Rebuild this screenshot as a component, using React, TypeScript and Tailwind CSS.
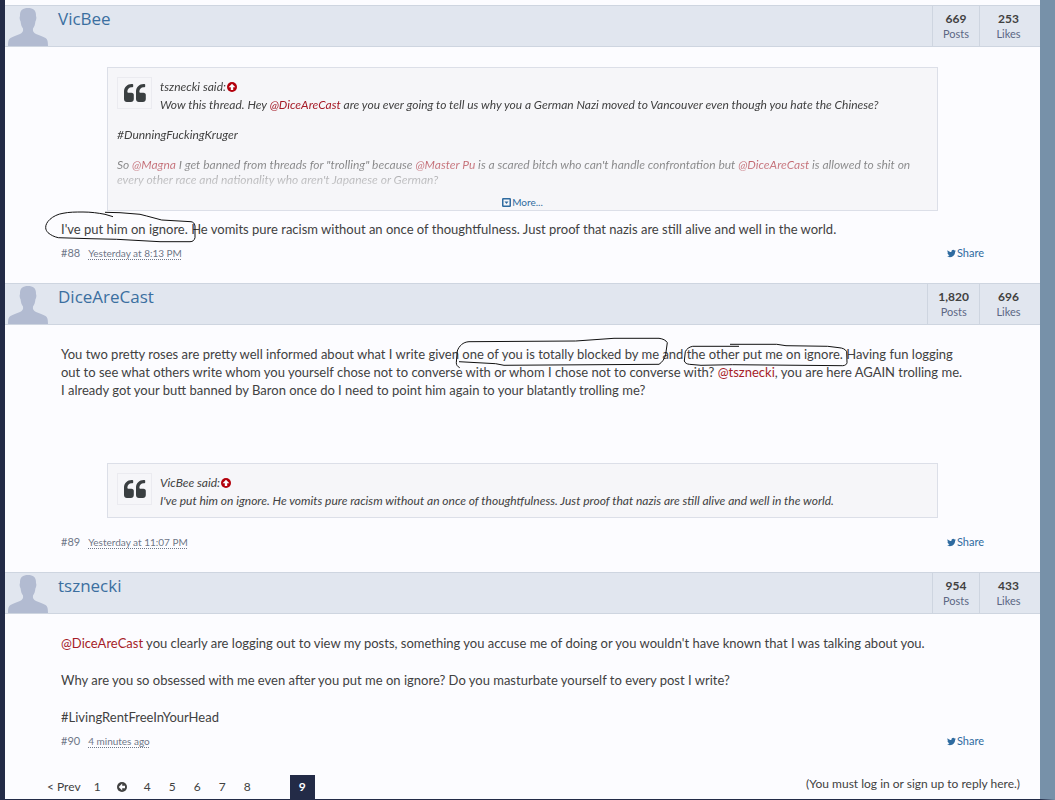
import type { ReactNode } from 'react';
import { FaTwitter } from 'react-icons/fa';

function Mention({ children }: { children: ReactNode }) {
  return <a href="#member" className="text-[#a61c28]">{children}</a>;
}

function Avatar() {
  return (
    <svg viewBox="0 0 40 39" className="h-[39px] w-10 fill-[#b2bbd1]" aria-hidden="true">
      <path d="M20 1c5 0 8.300 2 8 8 .8 1.500.2 4-.6 5.500-.3 3-1 5-2.400 7-.5 2.500.5 4.500 3 5.500 3.500 1.300 7 2.500 9.500 4 1.800 1.200 2.500 3 2.500 8H0c0-5 .7-6.800 2.500-8C5 29.500 8.500 28.300 12 27c2.500-1 3.500-3 3-5.500-1.400-2-2.100-4-2.400-7-.8-1.500-1.400-4-.6-5.500C11.700 3 15 1 20 1z" />
    </svg>
  );
}

function QuoteMark() {
  return (
    <svg viewBox="0 0 22 18" className="h-[18px] w-[22px] fill-[#3a3f41]" aria-hidden="true">
      <path d="M9.800 11v4c0 1.700-1.200 3-2.900 3h-4C1.200 18 0 16.700 0 15V7.500C0 3.400 3.300 0 7.600 0h.8c.5 0 .8.300.8.800v1.700c0 .5-.3.800-.8.800h-.8C5.300 3.300 3.400 5 3.400 7.300v.4c0 .7.500 1.100 1.100 1.100h3c1.500 0 2.300 1 2.300 2.200z" />
      <path d="M21.800 11v4c0 1.700-1.200 3-2.900 3h-4c-1.700 0-2.900-1.300-2.900-3V7.500C12 3.400 15.300 0 19.600 0h.8c.5 0 .8.300.8.800v1.700c0 .5-.3.800-.8.800h-.8c-2.300 0-4.200 1.700-4.200 4v.4c0 .7.500 1.100 1.100 1.100h3c1.500 0 2.300 1 2.300 2.200z" />
    </svg>
  );
}

function ArrowCircle({ className }: { className: string }) {
  return (
    <svg viewBox="0 0 10 10" className={className} aria-hidden="true">
      <circle cx="5" cy="5" r="5" fill="currentColor" />
      <path d="M5 1.700 8.400 5.200H6.200V8H3.800V5.200H1.600z" fill="#fcfcff" />
    </svg>
  );
}

type PostProps = {
  name: string;
  posts: string;
  likes: string;
  number: string;
  time: string;
  children: ReactNode;
};

function Post({ name, posts, likes, number, time, children }: PostProps) {
  return (
    <article className="mb-[22px]">
      <header className="flex h-[42px] border-y border-[#ced5e0] bg-[#e1e6ef]">
        <div className="ml-[3px] mt-px w-10 shrink-0">
          <Avatar />
        </div>
        <h3 className="ml-[10px] flex-1 font-['Open_Sans',sans-serif] text-[17px] leading-[26px] text-[#3b6fa0]">
          <a href="#member">{name}</a>
        </h3>
        <dl className="flex text-center leading-[15px]">
          <div className="flex flex-col-reverse justify-center border-l border-[#ced5e0] px-[10px]">
            <dt className="text-[11px] text-[#5c6784]">Posts</dt>
            <dd className="text-[12px] font-bold">{posts}</dd>
          </div>
          <div className="flex w-[61px] flex-col-reverse justify-center border-l border-[#ced5e0] pr-[3px]">
            <dt className="text-[11px] text-[#5c6784]">Likes</dt>
            <dd className="text-[12px] font-bold">{likes}</dd>
          </div>
        </dl>
      </header>
      <div className="px-14 pt-5">
        <div className="text-[13px] leading-[18px]">{children}</div>
        <footer className="flex items-center pt-[7px] text-[11px] leading-4 text-[#6f7788]">
          <a href="#post" className="mr-2">{number}</a>
          <a href="#post" className="text-[10px] underline decoration-dotted underline-offset-2">{time}</a>
          <a href="#share" className="ml-auto flex items-center gap-px text-[#2f6ba0]">
            <FaTwitter size={9} />
            Share
          </a>
        </footer>
      </div>
    </article>
  );
}

function Quote({ author, children, more }: { author: string; children: ReactNode; more?: boolean }) {
  return (
    <blockquote className="mx-[46px] mb-[9px] border border-[#dcdfe8] bg-[#f6f6f9] px-[9px] pt-[9px] text-[12px] leading-[15px]">
      <div className="float-left mr-2 flex h-8 w-[35px] items-center justify-center border border-[#ebebf0]">
        <QuoteMark />
      </div>
      <div className={more ? 'italic [mask-image:linear-gradient(to_bottom,black_66px,transparent_120px)]' : 'pb-[9px] italic'}>
        <p className="flex items-center leading-5">
          {author} said:
          <a href="#quoted" aria-label="Go to post">
            <ArrowCircle className="ml-px size-[10px] text-[#b3000c]" />
          </a>
        </p>
        {children}
      </div>
      {more && (
        <div className="flex h-[23px] items-end justify-center">
          <button className="flex items-center gap-px text-[10px] leading-4 text-[#2f6ba0]">
            <svg viewBox="0 0 9 9" className="size-[9px]" aria-hidden="true">
              <rect x=".75" y=".75" width="7.500" height="7.500" rx=".5" fill="none" stroke="currentColor" strokeWidth="1.500" />
              <path d="M2.500 3.500h4l-2 2.500z" fill="currentColor" />
            </svg>
            More...
          </button>
        </div>
      )}
    </blockquote>
  );
}

// pen marks drawn round a phrase
function Circled({ path, children, className }: { path: string; children: ReactNode; className: string }) {
  return (
    <span className="relative">
      {children}
      <svg className={`pointer-events-none absolute overflow-visible ${className}`} fill="none" stroke="#111" aria-hidden="true">
        <path d={path} />
      </svg>
    </span>
  );
}

export default function App() {
  return (
    <div className="min-h-screen border-b border-l-[5px] border-r-[15px] border-b-[#232b47] border-l-[#232b47] border-r-[#7791a9] bg-[#fcfcff] pt-[5px] font-['Lato',sans-serif] text-[#414141]">
      <main>
        <Post name="VicBee" posts="669" likes="253" number="#88" time="Yesterday at 8:13 PM">
          <Quote author="tsznecki" more>
            <p>
              Wow this thread. Hey <Mention>@DiceAreCast</Mention> are you ever going to tell us why you a German Nazi moved to Vancouver even though you hate the Chinese?
            </p>
            <p className="mt-[15px]">#DunningFuckingKruger</p>
            <p className="mt-[15px]">
              So <Mention>@Magna</Mention> I get banned from threads for "trolling" because <Mention>@Master Pu</Mention> is a scared bitch who can't handle confrontation but <Mention>@DiceAreCast</Mention> is allowed to shit on every other race and nationality who aren't Japanese or German?
            </p>
          </Quote>
          <p>
            <Circled
              className="-left-4 -top-[9px] h-[30px] w-[152px]"
              path="M68 4.700 60 2.300C53 1 46 0 38 0 31 0 24 0 18 1.300 13 2 8 4.500 5 7.300 2 10 .5 13 .7 15.700c0 2 1 3.500 2.300 5 3 2.500 6 4 10.300 5l31.700 1 26.700.6 43.300 2.400h30c3 0 4.300-1.500 5-4V14c-.5-3-2-4-4-4.300L116.700 8l-15-4L95 2.300 75 .7 60 .3"
            >
              I've put him on ignore.
            </Circled>{' '}
            He vomits pure racism without an once of thoughtfulness. Just proof that nazis are still alive and well in the world.
          </p>
        </Post>

        <Post name="DiceAreCast" posts="1,820" likes="696" number="#89" time="Yesterday at 11:07 PM">
          <p className="mb-16">
            You two pretty roses are pretty well informed about what I write given{' '}
            <Circled
              className="-left-[6px] -top-[8px] h-8 w-[212px]"
              path="M3.700 29.700C1.500 28.500.3 27 .3 24.700L1.300 13C3 8 7 4 13 3.700L119.700 3 158 .3h45c4 .5 7 2 8.300 4.400l-1.600 11.600c-1 4.500-3.500 8-6.700 10l-155 1-8.300-1.600L3 23.700"
            >
              one of you is totally blocked by me
            </Circled>{' '}
            and{' '}
            <Circled
              className="-left-[3px] -top-[2px] h-6 w-[164px]"
              path="M55 2.300H8.700C5 3 2.500 5 1.300 7.700L.3 17c.7 2 2.500 3 5 3.300l11.700 1 31.700-.6 110 1c2.500-.2 4-1.200 4.300-3l-.3-11c-1.200-2.500-4-3.700-7.700-4L143.700 2.300l-41.700-.6L92.700.3H46"
            >
              the other put me on ignore.
            </Circled>{' '}
            Having fun logging
            <br />
            out to see what others write whom you yourself chose not to converse with or whom I chose not to converse with? <Mention>@tsznecki</Mention>, you are here AGAIN trolling me.
            <br />
            I already got your butt banned by Baron once do I need to point him again to your blatantly trolling me?
          </p>
          <Quote author="VicBee">
            <p>I've put him on ignore. He vomits pure racism without an once of thoughtfulness. Just proof that nazis are still alive and well in the world.</p>
          </Quote>
        </Post>

        <Post name="tsznecki" posts="954" likes="433" number="#90" time="4 minutes ago">
          <p>
            <Mention>@DiceAreCast</Mention> you clearly are logging out to view my posts, something you accuse me of doing or you wouldn't have known that I was talking about you.
          </p>
          <p className="my-[19px]">Why are you so obsessed with me even after you put me on ignore? Do you masturbate yourself to every post I write?</p>
          <p>#LivingRentFreeInYourHead</p>
        </Post>
      </main>

      <div className="mt-[26px] flex justify-between pl-[42px] pr-5 text-[12px]">
        <nav className="flex h-6 items-center" aria-label="Pages">
          <a href="#prev">&lt; Prev</a>
          <a href="#1" className="ml-1 w-[25px] text-center">1</a>
          <a href="#more" aria-label="Earlier pages" className="flex w-[25px] justify-center">
            <ArrowCircle className="size-[10px] -rotate-90" />
          </a>
          <a href="#4" className="w-[25px] text-center">4</a>
          <a href="#5" className="w-[25px] text-center">5</a>
          <a href="#6" className="w-[25px] text-center">6</a>
          <a href="#7" className="w-[25px] text-center">7</a>
          <a href="#8" className="w-[25px] text-center">8</a>
          <a href="#9" aria-current="page" className="ml-[30px] w-[25px] bg-[#232b47] text-center font-bold leading-6 text-white">9</a>
        </nav>
        <p className="leading-[18px]">(You must log in or sign up to reply here.)</p>
      </div>
    </div>
  );
}
